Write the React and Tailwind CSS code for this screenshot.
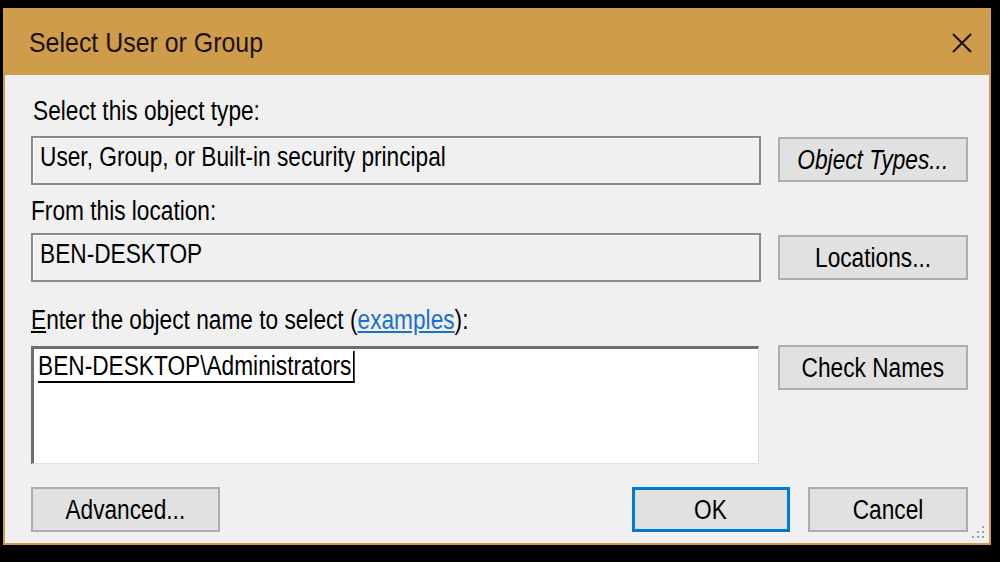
import React from 'react';

const font = "font-['Liberation_Sans',Arial,sans-serif]";

// the screenshot is squeezed horizontally, so text runs narrow
const Narrow = ({ children, className = '' }) => (
  <span className={`inline-block whitespace-nowrap scale-x-[0.84] ${className}`}>{children}</span>
);

const Button = ({ children, className = '', border = 'border-2 border-[#adadad]' }) => (
  <button
    type="button"
    className={`flex h-[45px] items-center justify-center bg-[#e1e1e1] text-[27px] leading-[32px] text-black ${border} ${className}`}
  >
    <Narrow>{children}</Narrow>
  </button>
);

const ReadonlyField = ({ value }) => (
  <div className="h-[49px] w-[730px] border-2 border-[#8a8a8a] bg-[#f0f0f0] pl-[7px] pt-[3px] text-[27px] leading-[32px] text-black shadow-[inset_1px_1px_0_#ffffff]">
    <Narrow className="origin-left">{value}</Narrow>
  </div>
);

const SizeGrip = () => (
  <svg width="18" height="18" viewBox="0 0 18 18" className="absolute bottom-[2px] right-[4px]">
    {[
      [15, 3], [15, 8], [15, 13], [10, 8], [10, 13], [5, 13],
    ].map(([x, y]) => (
      <rect key={`${x}-${y}`} x={x} y={y} width="2" height="2" fill="#a0a0a0" />
    ))}
  </svg>
);

export default function App() {
  return (
    <div className={`h-[562px] w-[1000px] overflow-hidden bg-black pl-[3px] pt-[8px] ${font}`}>
      <div className="flex h-[537px] w-[988px] flex-col bg-[#cf9c4c] px-[2px] pb-[2px]">
        {/* title bar */}
        <div className="flex h-[67px] shrink-0 items-center justify-between pl-[24px] pr-[14px] pt-[2px]">
          <span className="inline-block origin-left scale-x-[0.89] whitespace-nowrap text-[28px] leading-[32px] text-[#1a1208]">
            Select User or Group
          </span>
          <svg width="22" height="22" viewBox="0 0 22 22" className="mr-[2px]">
            <path d="M2 2 L20 20 M20 2 L2 20" stroke="#111" strokeWidth="2" fill="none" />
          </svg>
        </div>

        {/* body */}
        <div className="relative flex flex-1 flex-col bg-[#f0f0f0] pl-[26px]">
          <div className="flex">
            <div className="flex w-[730px] flex-col text-[27px] leading-[32px] text-black">
              <div className="mt-[20px] pl-[2px]">
                <Narrow className="origin-left">Select this object type:</Narrow>
              </div>
              <div className="mt-[9px]">
                <ReadonlyField value="User, Group, or Built-in security principal" />
              </div>
              <div className="mt-[10px]">
                <Narrow className="origin-left">From this location:</Narrow>
              </div>
              <div className="mt-[6px]">
                <ReadonlyField value="BEN-DESKTOP" />
              </div>
              <div className="mt-[22px]">
                <Narrow className="origin-left">
                  <span className="underline underline-offset-2">E</span>nter the object name to select (
                  <span className="text-[#1a6fd0] underline underline-offset-2">examples</span>):
                </Narrow>
              </div>
              <div className="mt-[10px] h-[118px] w-[728px] border-b border-l-[3px] border-r border-t-[3px] border-b-[#e4e4e4] border-l-[#6e6e6e] border-r-[#dcdcdc] border-t-[#6e6e6e] bg-white pl-[4px] pt-[1px]">
                <Narrow className="origin-left border-b-2 border-r-2 border-black pr-[2px] leading-[30px]">
                  BEN-DESKTOP\Administrators
                </Narrow>
              </div>
            </div>

            <div className="ml-[17px] flex w-[190px] flex-col">
              <Button className="mt-[62px] w-[190px] italic">Object Types...</Button>
              <Button className="mt-[53px] w-[190px]">Locations...</Button>
              <Button className="mt-[65px] w-[190px]">Check Names</Button>
            </div>
          </div>

          <div className="mt-[23px] flex items-center">
            <Button className="w-[189px]">Advanced...</Button>
            <Button className="ml-[412px] w-[158px]" border="border-[3px] border-[#0078d7]">OK</Button>
            <Button className="ml-[18px] w-[160px]">Cancel</Button>
          </div>

          <SizeGrip />
        </div>
      </div>
    </div>
  );
}
